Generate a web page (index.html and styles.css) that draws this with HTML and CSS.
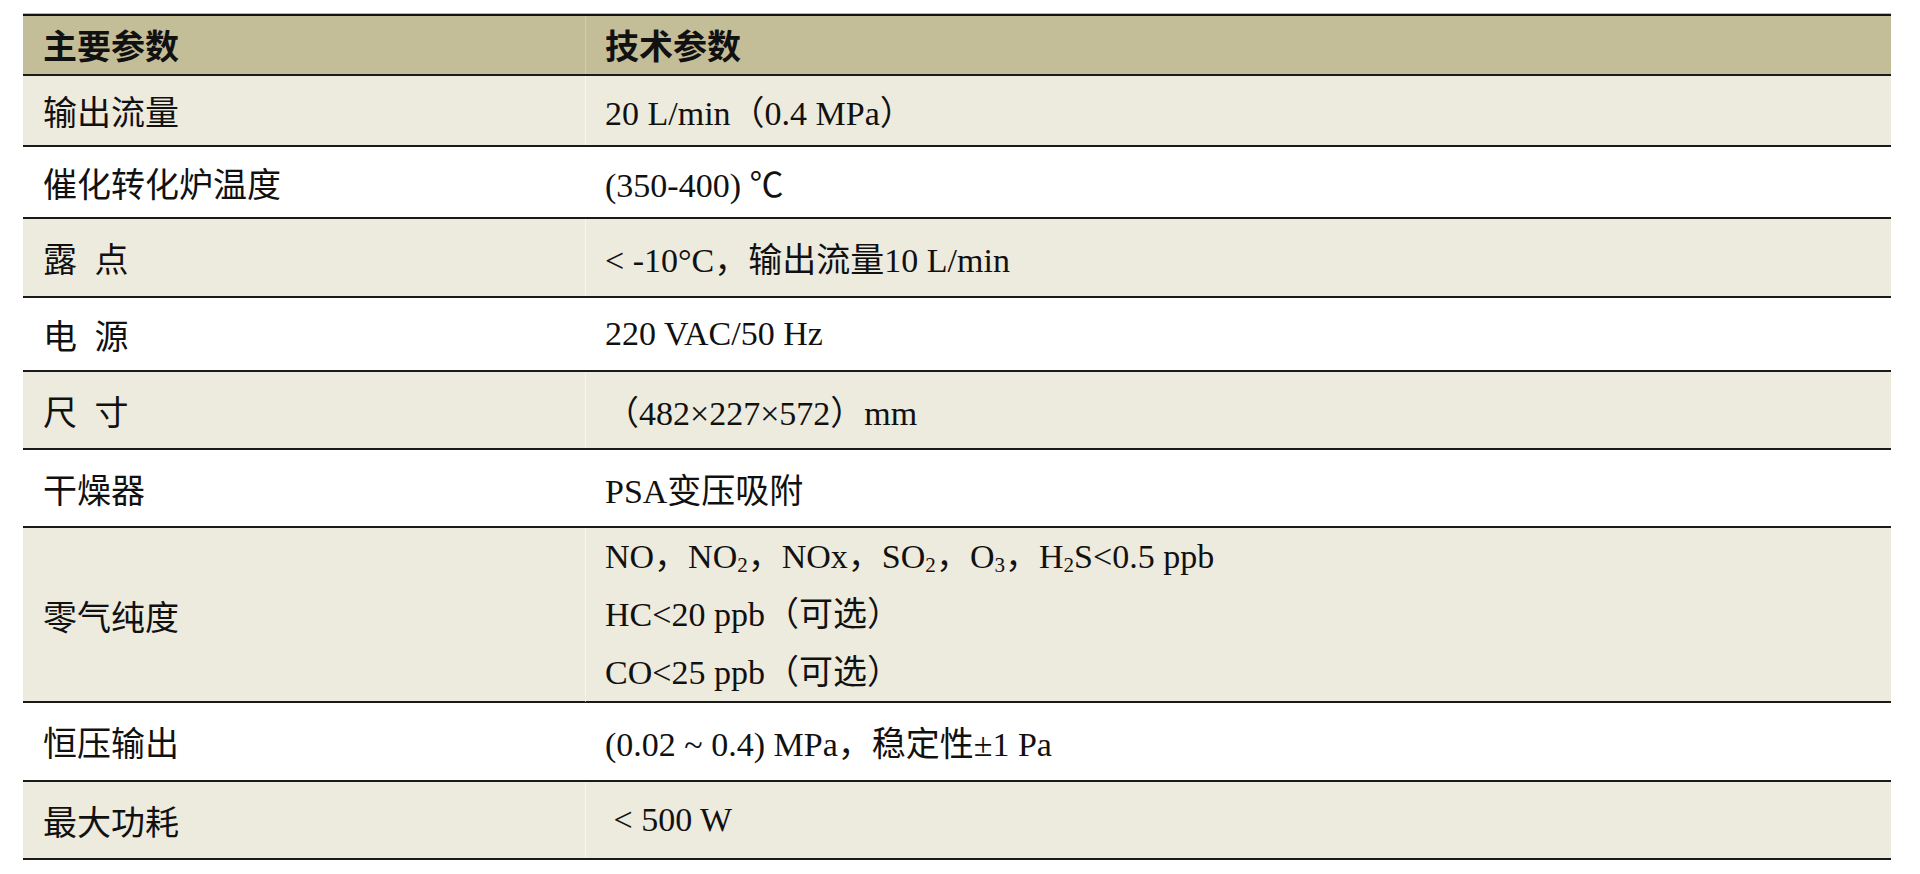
FILE: index.html
```html
<!DOCTYPE html>
<html lang="zh-CN">
<head>
<meta charset="utf-8">
<title>主要参数</title>
<link rel="stylesheet" href="styles.css">
</head>
<body>
<div class="spec">
  <div class="row head"><div class="c1">主要参数</div><div class="c2">技术参数</div></div>
  <div class="row alt h71"><div class="c1">输出流量</div><div class="c2">20 L/min（0.4 MPa）</div></div>
  <div class="row h72"><div class="c1">催化转化炉温度</div><div class="c2">(350-400) ℃</div></div>
  <div class="row alt h79"><div class="c1 spaced">露 点</div><div class="c2">&lt; -10°C，输出流量10 L/min</div></div>
  <div class="row h74"><div class="c1 spaced">电 源</div><div class="c2">220 VAC/50 Hz</div></div>
  <div class="row alt h78"><div class="c1 spaced">尺 寸</div><div class="c2">（482×227×572）mm</div></div>
  <div class="row h78"><div class="c1">干燥器</div><div class="c2">PSA变压吸附</div></div>
  <div class="row alt h175"><div class="c1">零气纯度</div>
    <div class="c2 lines">
      <div class="line">NO，NO<span class="sub">2</span>，NOx，SO<span class="sub">2</span>，O<span class="sub">3</span>，H<span class="sub">2</span>S&lt;0.5 ppb</div>
      <div class="line">HC&lt;20 ppb（可选）</div>
      <div class="line">CO&lt;25 ppb（可选）</div>
    </div>
  </div>
  <div class="row h79"><div class="c1">恒压输出</div><div class="c2">(0.02 ~ 0.4) MPa，稳定性±1 Pa</div></div>
  <div class="row alt h78"><div class="c1">最大功耗</div><div class="c2">&nbsp;&lt; 500 W</div></div>
</div>
</body>
</html>
```

FILE: styles.css
```css
html, body {
  margin: 0;
  padding: 0;
  background: #ffffff;
}

.spec {
  margin: 14px 0 0 23px;
  width: 1868px;
  border-top: 2px solid #141414;
  box-shadow: 0 -1px 0 #b8b8b0;
}

.row {
  display: grid;
  grid-template-columns: 562px 1fr;
  box-sizing: border-box;
  border-bottom: 2px solid #1a1a1a;
  background: #ffffff;
  color: #111111;
}

.row.alt { background: #edeade; }

.row.head {
  background: #c3bd98;
  height: 60px;
}

.h71 { height: 71px; }
.h72 { height: 72px; }
.h74 { height: 74px; }
.h78 { height: 78px; }
.h79 { height: 79px; }
.h175 { height: 175px; }

.c1, .c2 {
  display: flex;
  align-items: center;
  padding-left: 20px;
  white-space: nowrap;
}

.c1 {
  font-family: "Noto Sans CJK SC", "Noto Sans", sans-serif;
  font-size: 34px;
  font-weight: 400;
}

.c1.spaced { word-spacing: 10px; }

.c2 {
  font-family: "Liberation Serif", "Noto Sans CJK SC", serif;
  font-size: 34px;
  border-left: 1px solid rgba(255, 255, 255, 0.55);
  padding-left: 19px;
}

.head .c1, .head .c2 {
  font-family: "Noto Sans CJK SC", sans-serif;
  font-size: 34px;
  font-weight: 700;
  padding-bottom: 2px;
}

.head .c2 { border-left-color: rgba(255, 255, 255, 0.25); }

.c2.lines {
  flex-direction: column;
  align-items: flex-start;
  justify-content: center;
}

.line {
  height: 58px;
  line-height: 58px;
}

.sub {
  font-size: 0.62em;
  position: relative;
  top: 0.18em;
}
```
